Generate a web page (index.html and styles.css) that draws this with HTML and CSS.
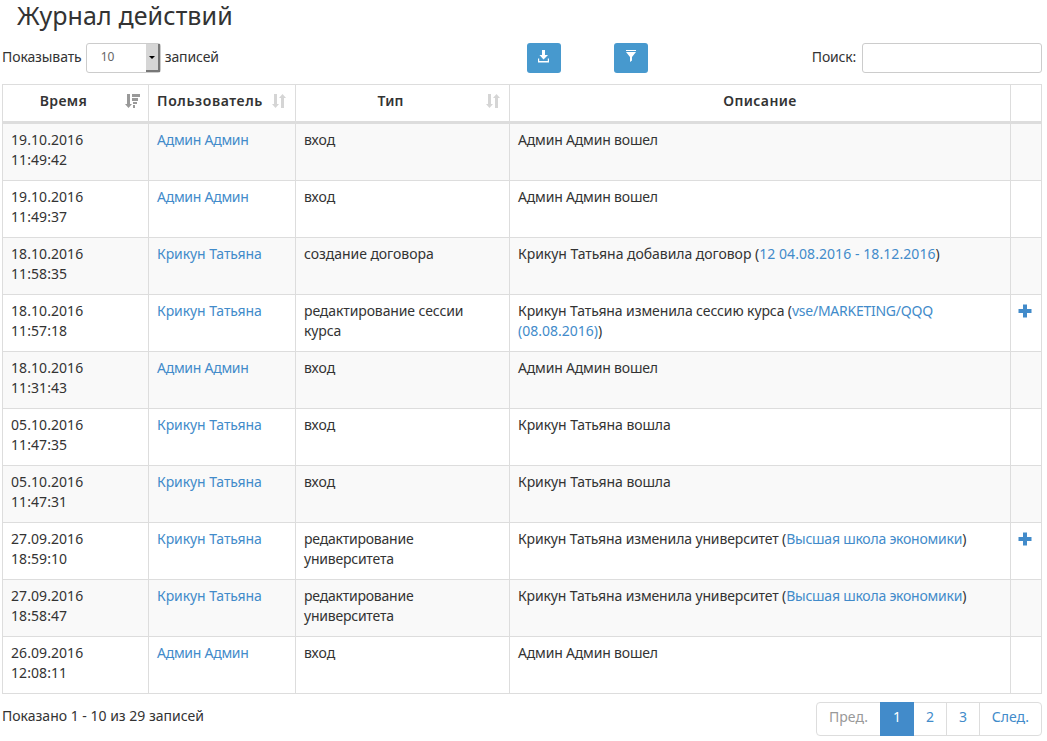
FILE: index.html
```html
<!DOCTYPE html>
<html lang="ru">
<head>
<meta charset="utf-8">
<title>Журнал действий</title>
<link rel="stylesheet" href="styles.css">
</head>
<body>
<svg class="sprite" aria-hidden="true">
  <symbol id="sort-desc" viewBox="0 0 15 16"><path d="M2 1h3v10h2l-3.500 4L0 11h2zM7 1h8v3H7zM7 5h6v3H7zM8 9h4v2H8zM8 12h2v3H8z"/></symbol>
  <symbol id="sort-both" viewBox="0 0 15 16"><path d="M2 1h3v10h2l-3.500 4L0 11h2zM9 15V5H7l3.500-4L14 5h-2v10z"/></symbol>
  <symbol id="plus" viewBox="0 0 14 14"><path d="M5 .5h4V5h4.500v4H9v4.500H5V9H.500V5H5z"/></symbol>
</svg>
<h1 class="title">Журнал действий</h1>
<div class="toolbar">
  <div class="length"><span>Показывать</span>
    <span class="select"><span class="value">10</span><span class="arrow"><i></i></span></span>
    <span>записей</span></div>
  <div class="buttons">
    <button class="btn"><svg width="12" height="13" viewBox="0 0 12 13"><path d="M4 0h3v5h3L5.500 9.500 1.500 5H4zM0 8.500h1.200V11h8.600V8.500H11V12.500H0z"/></svg></button>
    <button class="btn"><svg width="12" height="13" viewBox="0 0 12 13"><path d="M1 0h10v1H1zM1 2h10L7 7v3.500L5 12V7z"/></svg></button>
  </div>
  <label class="search"><span>Поиск:</span><input type="text"></label>
</div>
<table class="log">
  <colgroup><col class="c-time"><col class="c-user"><col class="c-type"><col class="c-desc"><col class="c-more"></colgroup>
  <thead><tr>
    <th><div class="head"><span class="h-time">Время</span><svg class="sort active"><use href="#sort-desc"/></svg></div></th>
    <th><div class="head"><span class="h-user">Пользователь</span><svg class="sort"><use href="#sort-both"/></svg></div></th>
    <th><div class="head"><span class="h-type">Тип</span><svg class="sort"><use href="#sort-both"/></svg></div></th>
    <th><div class="head plain"><span class="h-desc">Описание</span></div></th>
    <th></th>
  </tr></thead>
  <tbody>
    <tr><td>19.10.2016<br>11:49:42</td><td><a class="admin">Админ Админ</a></td><td>вход</td><td><span class="entered">Админ Админ вошел</span></td><td></td></tr>
    <tr><td>19.10.2016<br>11:49:37</td><td><a class="admin">Админ Админ</a></td><td>вход</td><td><span class="entered">Админ Админ вошел</span></td><td></td></tr>
    <tr><td>18.10.2016<br>11:58:35</td><td><a class="krikun">Крикун Татьяна</a></td><td><span class="create">создание договора</span></td><td><span class="added">Крикун Татьяна добавила договор (</span><a class="contract">12 04.08.2016 - 18.12.2016</a>)</td><td></td></tr>
    <tr><td>18.10.2016<br>11:57:18</td><td><a class="krikun">Крикун Татьяна</a></td><td><span class="edit">редактирование сессии<br>курса</span></td><td><span class="session">Крикун Татьяна изменила сессию курса (</span><a class="path">vse/MARKETING/QQQ</a><br><a class="date">(08.08.2016)</a>)</td><td><svg class="plus"><use href="#plus"/></svg></td></tr>
    <tr><td>18.10.2016<br>11:31:43</td><td><a class="admin">Админ Админ</a></td><td>вход</td><td><span class="entered">Админ Админ вошел</span></td><td></td></tr>
    <tr><td>05.10.2016<br>11:47:35</td><td><a class="krikun">Крикун Татьяна</a></td><td>вход</td><td><span class="krikun">Крикун Татьяна вошла</span></td><td></td></tr>
    <tr><td>05.10.2016<br>11:47:31</td><td><a class="krikun">Крикун Татьяна</a></td><td>вход</td><td><span class="krikun">Крикун Татьяна вошла</span></td><td></td></tr>
    <tr><td>27.09.2016<br>18:59:10</td><td><a class="krikun">Крикун Татьяна</a></td><td><span class="edit-univ">редактирование<br>университета</span></td><td><span class="univ">Крикун Татьяна изменила университет (</span><a class="hse">Высшая школа экономики</a>)</td><td><svg class="plus"><use href="#plus"/></svg></td></tr>
    <tr><td>27.09.2016<br>18:58:47</td><td><a class="krikun">Крикун Татьяна</a></td><td><span class="edit-univ">редактирование<br>университета</span></td><td><span class="univ">Крикун Татьяна изменила университет (</span><a class="hse">Высшая школа экономики</a>)</td><td></td></tr>
    <tr><td>26.09.2016<br>12:08:11</td><td><a class="admin">Админ Админ</a></td><td>вход</td><td><span class="entered">Админ Админ вошел</span></td><td></td></tr>
  </tbody>
</table>
<div class="footer">
  <div class="info">Показано 1 - 10 из 29 записей</div>
  <div class="pager"><a class="prev">Пред.</a><a class="page current">1</a><a class="page">2</a><a class="page">3</a><a class="next">След.</a></div>
</div>
</body>
</html>
```
FILE: styles.css
```css
* { box-sizing: border-box; }
body { margin: 0; width: 1047px; height: 741px; padding: 0 5px 0 2px; overflow: hidden; background: #fff; color: #333; font: 14px/20px "Noto Sans", "Open Sans", sans-serif; white-space: nowrap; }
.sprite { display: none; }
.title { margin: 0; padding: 0 0 0 15px; height: 43px; font-size: 25px; line-height: 31px; font-weight: 400; letter-spacing: 0.1px; }
.toolbar { display: grid; grid-template-columns: 525px 1fr 240px; height: 41px; }
.length { display: flex; height: 30px; gap: 4px; line-height: 27px; letter-spacing: -0.1px; }
.select { display: flex; justify-content: space-between; width: 75px; height: 30px; border: 1px solid #ccc; border-radius: 3px; line-height: 26px; }
.value { padding-left: 14px; font-size: 12px; color: #666; letter-spacing: 0.1px; }
.arrow { display: flex; align-items: center; justify-content: center; width: 14px; background: #d6d6d6; border-right: 2px solid #777; border-bottom: 2px solid #777; }
.arrow i { border: 3px solid transparent; border-top-color: #000; border-bottom: 0; }
.buttons { display: flex; gap: 53px; }
.btn { width: 34px; height: 30px; padding: 0 0 3px; border: 0; border-radius: 3px; background: #4799ce; display: flex; justify-content: center; align-items: center; }
.btn svg { fill: #fff; display: block; }
.search { display: flex; justify-content: flex-end; line-height: 27px; gap: 6px; letter-spacing: -0.2px; }
.search input { width: 180px; height: 30px; border: 1px solid #ccc; border-radius: 3px; padding: 4px 8px; }
.log { table-layout: fixed; width: 1040px; border-spacing: 0; border-top: 1px solid #ddd; border-left: 1px solid #ddd; }
.c-time { width: 146px; }
.c-user { width: 147px; }
.c-type { width: 214px; }
.c-desc { width: 501px; }
.c-more { width: 31px; }
th { height: 39px; padding: 6px 8px 0; border-right: 1px solid #ddd; border-bottom: 3px solid #ddd; vertical-align: top; font-weight: 600; }
.head { display: flex; justify-content: center; position: relative; padding-right: 24px; }
.plain { padding-right: 0; }
.h-time, .h-desc { letter-spacing: 0.4px; }
.h-user { letter-spacing: 0.6px; }
.h-type { letter-spacing: 0.2px; }
.sort { position: absolute; right: 0; top: 2px; width: 15px; height: 16px; fill: #d5d5d5; }
.active { fill: #999; }
td { height: 57px; padding: 6px 8px 0; border-right: 1px solid #ddd; border-bottom: 1px solid #ddd; vertical-align: top; }
td:first-child { letter-spacing: 0.07px; }
tbody tr:nth-child(odd) { background: #f9f9f9; }
a { color: #428bca; }
.admin { letter-spacing: -0.27px; }
.entered { letter-spacing: -0.18px; }
.krikun { letter-spacing: -0.08px; }
.create { letter-spacing: -0.05px; }
.edit { letter-spacing: -0.11px; }
.edit-univ { letter-spacing: -0.22px; }
.added { letter-spacing: -0.04px; }
.contract { letter-spacing: 0.07px; }
.session { letter-spacing: -0.1px; }
.path { letter-spacing: -0.25px; }
.univ { letter-spacing: -0.13px; }
.hse { letter-spacing: -0.23px; }
.plus { display: block; width: 14px; height: 14px; margin: 3px 0 0 -1px; fill: #428bca; }
.footer { display: flex; justify-content: space-between; padding-top: 8px; }
.info { line-height: 28px; }
.pager { display: flex; height: 34px; border: 1px solid #ddd; border-radius: 4px; line-height: 27px; text-align: center; }
.pager a { border-right: 1px solid #ddd; width: 33px; }
.pager .prev { width: 63px; color: #999; border-right: 0; }
.pager .current { width: 34px; height: 34px; margin-top: -1px; padding-top: 1px; background: #428bca; color: #fff; border-right: 0; }
.pager .next { width: 61px; border-right: 0; }
```
